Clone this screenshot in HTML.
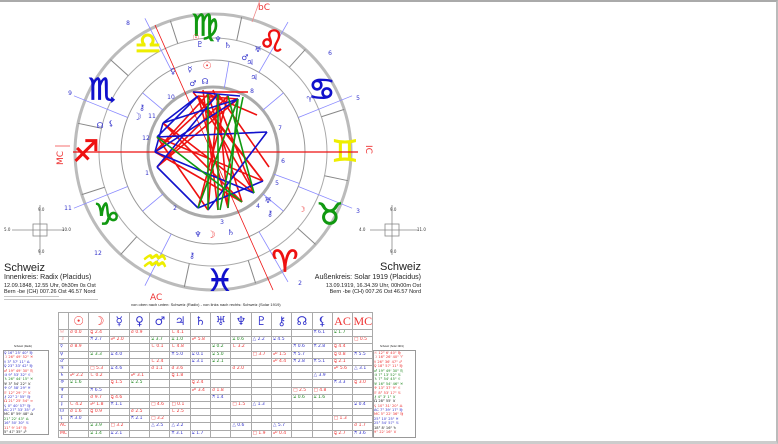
<!DOCTYPE html>
<html><head><meta charset="utf-8"><style>
*{margin:0;padding:0;box-sizing:border-box}
body{width:778px;height:444px;background:#fff;position:relative;overflow:hidden;font-family:"Liberation Sans","DejaVu Sans",sans-serif}
.frame{position:absolute;left:0;top:0;width:778px;height:444px;border-top:2px solid #aaa;border-right:2px solid #bbb;border-bottom:3px solid #ccc}
.t{position:absolute;white-space:nowrap;color:#222}
.a{position:absolute;left:58px;top:312px;display:grid;grid-template-columns:10px repeat(15,20.3px);grid-template-rows:17px repeat(15,7.2px);font-size:4.5px;font-family:"DejaVu Sans",sans-serif;border-top:1px solid #aaa;border-left:1px solid #aaa}
.a span{border-right:1px solid #aaa;border-bottom:1px solid #aaa;line-height:6px;white-space:nowrap;overflow:hidden;padding-left:1px}
.a .h{font-size:12px;line-height:16px;text-align:center;padding:0}
.r{color:#e33}.b{color:#33c}.g{color:#282}.k{color:#222}
.sm{position:absolute;border:1px solid #999;font-size:3.6px;line-height:4.4px;font-family:"DejaVu Sans",sans-serif;overflow:hidden}
.sm div{white-space:nowrap;overflow:hidden;height:4.4px}
</style></head><body>
<div class="frame"></div>
<svg width="778" height="444" style="position:absolute;left:0;top:0" font-family="DejaVu Sans">
<g transform="translate(213,152)">
<circle r="138" fill="none" stroke="#bbb" stroke-width="3"/>
<circle r="114" fill="none" stroke="#aaa" stroke-width="1"/>
<circle r="92" fill="none" stroke="#999" stroke-width="1"/>
<circle r="65" fill="none" stroke="#aaa" stroke-width="3"/>
<g stroke="#888" stroke-width="1">
<line x1="114" x2="138" transform="rotate(-108)"/><line x1="114" x2="138" transform="rotate(-78)"/>
<line x1="114" x2="138" transform="rotate(-48)"/><line x1="114" x2="138" transform="rotate(-18)"/>
<line x1="114" x2="138" transform="rotate(12)"/><line x1="114" x2="138" transform="rotate(42)"/>
<line x1="114" x2="138" transform="rotate(72)"/><line x1="114" x2="138" transform="rotate(102)"/>
<line x1="114" x2="138" transform="rotate(132)"/><line x1="114" x2="138" transform="rotate(162)"/>
<line x1="114" x2="138" transform="rotate(192)"/><line x1="114" x2="138" transform="rotate(222)"/>
</g>
<g stroke="#88f" stroke-width="0.8">
<line x1="92" x2="150" transform="rotate(-117)"/><line x1="92" x2="150" transform="rotate(-60)"/>
<line x1="92" x2="150" transform="rotate(-22)"/><line x1="92" x2="150" transform="rotate(22)"/>
<line x1="92" x2="150" transform="rotate(60)"/><line x1="92" x2="150" transform="rotate(117)"/>
<line x1="92" x2="150" transform="rotate(158)"/><line x1="92" x2="150" transform="rotate(202)"/>
<line x1="65" x2="92" transform="rotate(-80)"/><line x1="65" x2="92" transform="rotate(-40)"/>
<line x1="65" x2="92" transform="rotate(20)"/><line x1="65" x2="92" transform="rotate(140)"/>
<line x1="65" x2="92" transform="rotate(220)"/><line x1="65" x2="92" transform="rotate(40)"/>
</g>
</g>
<g font-size="30" text-anchor="middle" dominant-baseline="central" stroke-width="0.8">
<text x="205" y="26" fill="#191" stroke="#191">♍</text>
<text x="272" y="42" fill="#e11" stroke="#e11">♌</text>
<text x="322" y="90" fill="#11c" stroke="#11c">♋</text>
<text x="345" y="152" fill="#ee0" stroke="#ee0">♊</text>
<text x="330" y="215" fill="#191" stroke="#191">♉</text>
<text x="285" y="262" fill="#e11" stroke="#e11">♈</text>
<text x="220" y="281" fill="#11c" stroke="#11c">♓</text>
<text x="155" y="262" fill="#ee0" stroke="#ee0">♒</text>
<text x="107" y="215" fill="#191" stroke="#191">♑</text>
<text x="86" y="152" fill="#e11" stroke="#e11">♐</text>
<text x="102" y="90" fill="#11c" stroke="#11c">♏</text>
<text x="148" y="44" fill="#ee0" stroke="#ee0">♎</text>
</g>
<g font-size="8" fill="#33c" text-anchor="middle">
<text x="196" y="40" fill="#e33">☉</text><text x="200" y="47">♇</text><text x="218" y="42">♆</text><text x="228" y="48">♄</text>
<text x="258" y="52">♅</text><text x="245" y="60">♂</text><text x="250" y="65">♃</text>
<text x="207" y="69" fill="#e33" font-size="10">☉</text><text x="190" y="72">☿</text><text x="173" y="74">♀</text>
<text x="193" y="86">♂</text><text x="205" y="84">☊</text><text x="254" y="80">♃</text>
<text x="142" y="110">⚷</text><text x="137" y="120" font-size="10">☽</text><text x="100" y="128">☊</text><text x="111" y="126">⚸</text>
<text x="268" y="203">♅</text><text x="270" y="216">⚷</text><text x="302" y="212" fill="#e33">☽</text>
<text x="198" y="237">♆</text><text x="211" y="238" fill="#e33" font-size="10">☽</text><text x="231" y="235">♄</text>
<text x="192" y="258">⚷</text><text x="310" y="102">♈</text>
</g>
<g font-size="6" fill="#33c" text-anchor="middle">
<text x="128" y="25">8</text><text x="330" y="55">6</text><text x="70" y="95">9</text><text x="358" y="100">5</text>
<text x="68" y="210">11</text><text x="358" y="213">3</text><text x="98" y="255">12</text><text x="300" y="285">2</text>
<text x="171" y="99">10</text><text x="152" y="118">11</text><text x="146" y="140">12</text><text x="147" y="175">1</text>
<text x="175" y="210">2</text><text x="222" y="224">3</text><text x="258" y="208">4</text><text x="277" y="185">5</text><text x="283" y="163">6</text><text x="280" y="130">7</text><text x="252" y="93">8</text>
</g>
<g font-size="9" fill="#e33">
<text x="258" y="10">bC</text><text x="150" y="300">AC</text>
<text x="63" y="165" transform="rotate(-90 63 165)">MC</text>
<text x="366" y="145" transform="rotate(90 366 145)">IC</text>
</g>
<line x1="73" y1="152" x2="358" y2="152" stroke="#e11" stroke-width="1.2"/>
<line x1="55" y1="146" x2="70" y2="146" stroke="#e11" stroke-width="0.6"/>
<line x1="155" y1="25" x2="273" y2="290" stroke="#e11" stroke-width="0.8"/>
<line x1="260" y1="0" x2="252" y2="22" stroke="#e88" stroke-width="0.8"/>
<g stroke-width="1.6" fill="none">
<g stroke="#e11">
<path d="M198 96L254 193M198 96L228 208M208 94L242 202M218 94L208 210M228 96L198 208M238 99L157 167M198 96L263 181M208 94L155 152M218 94L269 167M157 137L263 181M163 123L254 193M155 152L242 202M198 96L238 99M208 94L257 115M198 208L238 99M157 167L228 96M218 94L228 208M155 152L218 94M163 123L242 202M208 210L157 137M193 92L248 92M193 92L263 181M203 90L218 210M213 90L254 193"/>
</g>
<g stroke="#11c">
<path d="M198 96L163 123M163 123L155 152M198 96L157 137M157 137L267 132M267 132L208 210M238 99L155 152M155 152L254 193M218 94L157 167M163 123L238 99M198 208L263 181M157 167L198 208M193 92L240 96"/>
</g>
<g stroke="#191">
<path d="M208 94L208 210M218 94L218 210M238 99L228 208M228 96L254 193M157 137L242 202M238 99L198 208M243 97L220 210"/>
</g>
</g>
<g stroke="#888" stroke-width="0.8" fill="none">
<line x1="40" y1="205" x2="40" y2="255"/><line x1="12" y1="230" x2="64" y2="230"/>
<rect x="33" y="224" width="14" height="12"/>
<line x1="392" y1="205" x2="392" y2="255"/><line x1="370" y1="230" x2="418" y2="230"/>
<rect x="385" y="224" width="14" height="12"/>
</g>
<g font-size="4" fill="#333">
<text x="38" y="211">9.0</text><text x="38" y="253">9.0</text><text x="4" y="231">5.0</text><text x="62" y="231">10.0</text>
<text x="390" y="211">9.0</text><text x="390" y="253">9.0</text><text x="359" y="231">4.0</text><text x="417" y="231">11.0</text>
</g>
</svg>

<div class="t" style="left:4px;top:262px;font-size:11px">Schweiz</div>
<div class="t" style="left:4px;top:274px;font-size:7px">Innenkreis: Radix (Placidus)</div>
<div class="t" style="left:4px;top:283px;font-size:5.5px">12.09.1848, 12.55 Uhr,  0h30m 0s Ost</div>
<div class="t" style="left:4px;top:289px;font-size:5.5px">Bern -be (CH) 007.26 Ost 46.57 Nord</div>
<div class="t" style="left:4px;top:296px;font-size:2px;color:#666">xxxxxxxxxxxxxxxxxxxxxxxxxxxxxxxxxxxxxxxxxxxxxxxxxxxxxxx</div>
<div class="t" style="left:4px;top:299px;font-size:2px;color:#666">xxxxxxxxxxxxxxxxxxxxxxxxxxxxxxxxxxxxxxxxxxxxxxxxxxxxxxxxxxxxxxxxxxxxxxxxxxxxxxxxxxxxxxxxxxxxxx</div>
<div class="t" style="right:357px;top:261px;font-size:11px">Schweiz</div>
<div class="t" style="right:357px;top:274px;font-size:7px">Außenkreis: Solar 1919 (Placidus)</div>
<div class="t" style="right:357px;top:283px;font-size:5.5px">13.09.1919, 16.34.39 Uhr, 00h00m Ost</div>
<div class="t" style="right:357px;top:289px;font-size:5.5px">Bern -be (CH) 007.26 Ost 46.57 Nord</div>
<div class="t" style="left:131px;top:302px;font-size:4px">von oben nach unten: Schweiz (Radix) - von links nach rechts: Schweiz (Solar 1919)</div>

<div class="a">
<span style="border-right-color:#aaa;border-bottom-color:#aaa"></span><span class="h r">☉</span><span class="h r">☽</span><span class="h b">☿</span><span class="h b">♀</span><span class="h b">♂</span><span class="h b">♃</span><span class="h b">♄</span><span class="h b">♅</span><span class="h b">♆</span><span class="h b">♇</span><span class="h b">⚷</span><span class="h b">☊</span><span class="h b">⚸</span><span class="h r" style="font-family:'Liberation Serif'">AC</span><span class="h r" style="font-family:'Liberation Serif'">MC</span>
<span class="r">☉</span><span class="r">☌ 0.0</span><span class="r">⚼ 2.4</span><span></span><span class="r">☌ 0.9</span><span></span><span class="r">∟ 4.1</span><span></span><span></span><span></span><span></span><span></span><span></span><span class="b">⚻ 6.1</span><span class="g">⚺ 1.7</span><span></span>
<span class="r">☽</span><span></span><span class="b">⚻ 2.7</span><span class="r">☍ 2.0</span><span></span><span class="g">⚺ 3.7</span><span class="g">⚺ 1.0</span><span class="r">☍ 5.8</span><span></span><span class="g">⚺ 0.6</span><span class="b">△ 2.2</span><span class="b">⚺ 4.5</span><span></span><span></span><span></span><span class="r">□ 0.5</span>
<span class="b">☿</span><span class="r">☌ 8.9</span><span></span><span></span><span></span><span class="r">∟ 0.1</span><span class="r">∟ 4.8</span><span></span><span class="g">⚺ 0.2</span><span class="r">∟ 3.2</span><span></span><span></span><span class="b">⚻ 0.6</span><span class="b">⚻ 2.8</span><span class="r">⚼ 4.4</span><span></span>
<span class="b">♀</span><span></span><span class="g">⚺ 3.3</span><span class="b">⚺ 4.0</span><span></span><span></span><span class="b">⚻ 5.0</span><span class="b">⚺ 0.1</span><span class="g">⚺ 5.0</span><span></span><span class="r">□ 3.7</span><span class="r">☍ 1.5</span><span class="b">⚻ 5.7</span><span></span><span class="r">⚼ 0.8</span><span class="b">⚻ 5.5</span>
<span class="b">♂</span><span></span><span></span><span></span><span></span><span class="r">∟ 2.4</span><span></span><span class="b">⚺ 3.1</span><span class="g">⚺ 2.1</span><span></span><span></span><span class="r">☍ 4.4</span><span class="b">⚻ 2.8</span><span class="b">⚻ 5.1</span><span class="r">⚼ 2.1</span><span></span>
<span class="b">♃</span><span></span><span class="r">□ 5.3</span><span class="b">⚺ 4.6</span><span></span><span class="r">☌ 1.1</span><span class="r">☌ 3.6</span><span></span><span></span><span class="r">☌ 2.0</span><span></span><span></span><span></span><span></span><span class="r">☍ 5.6</span><span class="b">△ 3.1</span>
<span class="b">♄</span><span class="r">☍ 2.2</span><span class="r">∟ 0.2</span><span></span><span class="r">☍ 3.1</span><span></span><span class="r">⚼ 1.8</span><span></span><span></span><span></span><span></span><span></span><span></span><span class="b">△ 3.9</span><span></span><span></span>
<span class="b">♅</span><span class="g">⚺ 1.6</span><span></span><span class="r">⚼ 1.5</span><span class="g">⚺ 2.5</span><span></span><span></span><span class="r">⚼ 2.4</span><span></span><span></span><span></span><span></span><span></span><span></span><span class="b">⚻ 3.3</span><span class="r">⚼ 3.0</span>
<span class="b">♆</span><span></span><span class="b">⚻ 6.5</span><span></span><span></span><span></span><span></span><span class="r">☍ 3.4</span><span class="r">☌ 1.8</span><span></span><span></span><span></span><span class="r">□ 2.5</span><span class="r">□ 4.8</span><span></span><span></span>
<span class="b">♇</span><span></span><span class="r">☌ 9.7</span><span class="r">⚼ 4.6</span><span></span><span></span><span></span><span></span><span class="b">⚻ 1.4</span><span></span><span></span><span></span><span class="g">⚺ 0.6</span><span class="g">⚺ 1.6</span><span></span><span></span>
<span class="b">⚷</span><span class="r">∟ 4.2</span><span class="r">☍ 1.8</span><span class="b">⚻ 1.1</span><span></span><span class="r">□ 4.6</span><span class="r">□ 0.1</span><span></span><span></span><span class="r">□ 1.5</span><span class="b">△ 1.3</span><span></span><span></span><span></span><span></span><span class="b">⚺ 0.4</span>
<span class="b">☊</span><span class="r">☌ 1.6</span><span class="r">⚼ 0.9</span><span></span><span class="r">☌ 2.5</span><span></span><span class="r">∟ 2.5</span><span></span><span></span><span></span><span></span><span></span><span></span><span></span><span></span><span></span>
<span class="b">⚸</span><span class="b">⚻ 3.0</span><span></span><span></span><span class="b">⚻ 2.1</span><span class="r">□ 3.2</span><span></span><span></span><span></span><span></span><span></span><span></span><span></span><span></span><span class="r">□ 1.3</span><span></span>
<span class="r">AC</span><span></span><span class="g">⚺ 3.9</span><span class="r">□ 3.2</span><span></span><span class="b">△ 2.5</span><span class="b">△ 2.2</span><span></span><span></span><span class="b">△ 0.6</span><span></span><span class="b">△ 5.7</span><span></span><span></span><span></span><span class="r">☌ 1.7</span>
<span class="r">MC</span><span></span><span class="g">⚺ 1.4</span><span class="b">⚺ 2.1</span><span></span><span></span><span class="b">⚻ 3.1</span><span class="b">⚺ 1.7</span><span></span><span></span><span class="r">□ 1.9</span><span class="r">☍ 0.4</span><span></span><span></span><span class="r">⚼ 2.7</span><span class="b">⚻ 3.6</span>
</div>

<div class="t" style="left:14px;top:345px;font-size:2.5px">Schweiz (Radix)</div>
<div class="sm" style="left:3px;top:350px;width:46px;height:85px">
<div class="b">♀ 16° 25' 40" ♍</div><div class="r">☽ 26° 49' 52" ♓</div><div class="b">☿ 3° 57' 11" ♎</div><div class="b">♀ 23° 33' 42" ♍</div>
<div class="r">♂ 19° 49' 30" ♏</div><div class="b">♃ 9° 53' 32" ♌</div><div class="g">♄ 26° 44' 15" ♓</div><div class="k">♅ 3° 54' 22" ♉</div>
<div class="b">♆ 0° 58' 29" ♓</div><div class="r">♇ 12° 29' 7" ♉</div><div class="b">⚷ 22° 2' 55" ♍</div><div class="r">☊ 21° 25' 54" ♒</div>
<div class="b">⚸ 0° 40' 57" ♍</div><div class="b">AC 27° 33' 35" ♐</div><div class="k">MC 8° 59' 48" ♎</div><div class="g">21° 22' 43" ♎</div>
<div class="b">16° 50' 30" ♋</div><div class="r">11° 9' 14" ♍</div><div class="k">5° 47' 35" ♐</div>
</div>
<div class="t" style="left:380px;top:345px;font-size:2.5px">Schweiz (Solar 1919)</div>
<div class="sm" style="left:373px;top:350px;width:43px;height:88px">
<div class="r">☉ 12° 6' 40" ♍</div><div class="r">☽ 16° 26' 40" ♈</div><div class="r">☿ 26° 36' 47" ♐</div><div class="r">♀ 18° 57' 11" ♍</div>
<div class="g">♂ 19° 49' 30" ♏</div><div class="g">♃ 7° 13' 52" ♋</div><div class="g">♄ 7° 54' 45" ♌</div><div class="g">♅ 16° 54' 46" ♓</div>
<div class="r">♆ 13° 37' 9" ♌</div><div class="r">♇ 8° 53' 17" ♋</div><div class="g">⚷ 4° 3' 1" ♉</div><div class="k">☊ 28° 55' ♉</div>
<div class="r">⚸ 10° 31' 20" ♎</div><div class="b">AC 7° 39' 17" ♍</div><div class="r">MC 5° 22' 36" ♍</div><div class="b">25° 10' 25" ♓</div>
<div class="b">25° 54' 57" ♋</div><div class="k">18° 8' 16" ♑</div><div class="r">9° 22' 16" ♉</div>
</div>
</body></html>
